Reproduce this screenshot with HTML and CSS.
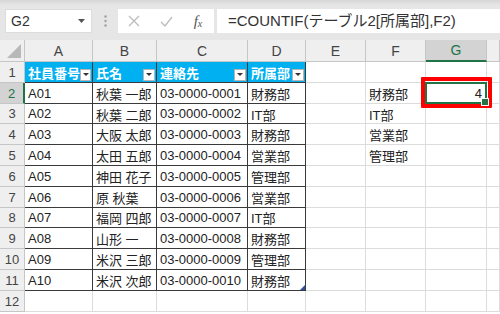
FILE: index.html
```html
<!DOCTYPE html>
<html lang="ja">
<head>
<meta charset="utf-8">
<title>Excel COUNTIF</title>
<link rel="stylesheet" href="styles.css">
</head>
<body>
<div class="app">
  <div class="toolbar">
    <div class="namebox"><span>G2</span><svg class="caret" width="7" height="4" viewBox="0 0 7 4"><polygon points="0,0 7,0 3.5,4" fill="#555"/></svg></div>
    <div class="grip"><svg width="3" height="12" viewBox="0 0 3 12"><circle cx="1.5" cy="1.5" r="1.2" fill="#a0a0a0"/><circle cx="1.5" cy="6" r="1.2" fill="#a0a0a0"/><circle cx="1.5" cy="10.5" r="1.2" fill="#a0a0a0"/></svg></div>
    <div class="fbtns">
      <span class="slot"><svg width="12" height="12" viewBox="0 0 12 12"><path d="M1 1 L11 11 M11 1 L1 11" stroke="#bcbcbc" stroke-width="1.3" fill="none"/></svg></span>
      <span class="slot"><svg width="13" height="11" viewBox="0 0 13 11"><path d="M1 6 L5 10 L12 1" stroke="#bcbcbc" stroke-width="1.3" fill="none"/></svg></span>
      <span class="slot fx">f<span class="sub">x</span></span>
    </div>
    <div class="formula">=COUNTIF(テーブル2[所属部],F2)</div>
  </div>
  <div class="sheet">
    <div class="ch corner"><svg width="14" height="14" viewBox="0 0 14 14"><polygon points="14,0 14,14 0,14" fill="#b8b8b8"/></svg></div>
    <div class="ch">A</div><div class="ch">B</div><div class="ch">C</div><div class="ch">D</div><div class="ch">E</div><div class="ch">F</div><div class="ch csel">G</div><div class="ch"></div>

    <div class="rh">1</div>
    <div class="th">社員番号<span class="fb"></span></div>
    <div class="th">氏名<span class="fb"></span></div>
    <div class="th">連絡先<span class="fb"></span></div>
    <div class="th">所属部<span class="fb"></span></div>
    <div></div><div></div><div></div><div></div>

    <div class="rh rsel">2</div>
    <div class="td">A01</div><div class="td">秋葉 一郎</div><div class="td">03-0000-0001</div><div class="td">財務部</div>
    <div></div><div>財務部</div><div class="g2">4<span class="mark"></span></div><div></div>

    <div class="rh">3</div>
    <div class="td">A02</div><div class="td">秋葉 二郎</div><div class="td">03-0000-0002</div><div class="td">IT部</div>
    <div></div><div>IT部</div><div></div><div></div>

    <div class="rh">4</div>
    <div class="td">A03</div><div class="td">大阪 太郎</div><div class="td">03-0000-0003</div><div class="td">財務部</div>
    <div></div><div>営業部</div><div></div><div></div>

    <div class="rh">5</div>
    <div class="td">A04</div><div class="td">太田 五郎</div><div class="td">03-0000-0004</div><div class="td">営業部</div>
    <div></div><div>管理部</div><div></div><div></div>

    <div class="rh">6</div>
    <div class="td">A05</div><div class="td">神田 花子</div><div class="td">03-0000-0005</div><div class="td">管理部</div>
    <div></div><div></div><div></div><div></div>

    <div class="rh">7</div>
    <div class="td">A06</div><div class="td">原 秋葉</div><div class="td">03-0000-0006</div><div class="td">営業部</div>
    <div></div><div></div><div></div><div></div>

    <div class="rh">8</div>
    <div class="td">A07</div><div class="td">福岡 四郎</div><div class="td">03-0000-0007</div><div class="td">IT部</div>
    <div></div><div></div><div></div><div></div>

    <div class="rh">9</div>
    <div class="td">A08</div><div class="td">山形 一</div><div class="td">03-0000-0008</div><div class="td">財務部</div>
    <div></div><div></div><div></div><div></div>

    <div class="rh">10</div>
    <div class="td">A09</div><div class="td">米沢 三郎</div><div class="td">03-0000-0009</div><div class="td">管理部</div>
    <div></div><div></div><div></div><div></div>

    <div class="rh">11</div>
    <div class="td">A10</div><div class="td">米沢 次郎</div><div class="td">03-0000-0010</div><div class="td tend">財務部</div>
    <div></div><div></div><div></div><div></div>

    <div class="rh">12</div>
    <div></div><div></div><div></div><div></div><div></div><div></div><div></div><div></div>
  </div>
</div>
</body>
</html>
```

FILE: styles.css
```css
* { box-sizing: border-box; margin: 0; padding: 0; }
html, body { width: 500px; height: 314px; overflow: hidden; background: #fff; }
body { font-family: "Liberation Sans", "Noto Sans CJK JP", sans-serif; color: #222; }

.toolbar {
  height: 40px;
  display: flex;
  align-items: flex-start;
  padding-top: 9px;
  background: linear-gradient(#d6d6d6 0, #e6e6e6 5px, #e6e6e6 100%);
}
.namebox {
  margin-left: 5px;
  width: 87px;
  height: 24px;
  background: #fff;
  border: 1px solid #dcdcdc;
  display: flex;
  align-items: center;
  padding-left: 5px;
  font-size: 14px;
  color: #333;
}
.namebox .caret { margin-left: auto; margin-right: 6px; }
.grip { width: 26px; height: 24px; display: flex; align-items: center; justify-content: center; }
.fbtns {
  width: 96px;
  height: 24px;
  background: #fff;
  display: flex;
  align-items: center;
}
.slot { width: 32px; display: flex; justify-content: center; align-items: center; }
.fx {
  font-family: "Liberation Serif", serif;
  font-style: italic;
  font-size: 15px;
  color: #555;
  line-height: 1;
}
.fx .sub { font-size: 10px; position: relative; top: 3px; }
.formula {
  margin-left: 3px;
  flex: 1;
  height: 24px;
  background: #fff;
  font-size: 15px;
  line-height: 24px;
  padding-left: 11px;
  color: #333;
  white-space: nowrap;
}

.sheet {
  display: grid;
  grid-template-columns: 25px 68px 64px 91px 58px 60px 60px 61px 13px;
  grid-template-rows: 22px repeat(12, 20.8px);
  font-size: 13px;
}
.sheet > div {
  border-right: 1px solid #dcdcdc;
  border-bottom: 1px solid #dcdcdc;
  display: flex;
  align-items: center;
  padding: 1px 3px 0;
  white-space: nowrap;
}
.sheet > .ch {
  background: #efefef;
  border-color: #c6c6c6;
  justify-content: center;
  font-size: 14px;
  color: #444;
  padding: 0;
}
.sheet > .corner { justify-content: flex-end; align-items: flex-end; padding: 0 3px 3px 0; }
.sheet > .csel { background: #d3d3d3; border-bottom: 2px solid #217346; color: #217346; }
.sheet > .rh {
  background: #efefef;
  border-color: #c6c6c6;
  justify-content: center;
  color: #444;
  padding: 1px 0 0;
}
.sheet > .rsel { background: #d3d3d3; color: #217346; border-right: 2px solid #217346; }
.sheet > .th {
  background: #00b0f0;
  color: #fff;
  font-weight: bold;
  border-right-color: #3a3a3a;
  border-bottom-color: #3a3a3a;
  padding-right: 1px;
}
.sheet > .td { border-right-color: #3a3a3a; border-bottom-color: #3a3a3a; }
.fb {
  margin-left: auto;
  align-self: flex-end;
  margin-bottom: 1px;
  width: 12px;
  height: 12px;
  background: #fff;
  border: 1px solid #b5b5b5;
  display: flex;
  align-items: center;
  justify-content: center;
}
.fb::after {
  content: "";
  border-left: 3px solid transparent;
  border-right: 3px solid transparent;
  border-top: 3px solid #333;
}
.sheet > .g2 { position: relative; justify-content: flex-end; padding-right: 4px; }
.g2::before {
  content: "";
  position: absolute;
  top: -1px; left: -1px; right: -1px; bottom: -1px;
  border: 2px solid #217346;
}
.g2::after {
  content: "";
  position: absolute;
  right: -3px; bottom: -3px;
  width: 6px; height: 6px;
  background: #217346;
  border: 1px solid #fff;
}
.mark {
  position: absolute;
  top: -6px; left: -5px; right: -6px; bottom: -5px;
  border: 4px solid #ff0000;
  border-radius: 1px;
}
.sheet > .tend { position: relative; }
.tend::after {
  content: "";
  position: absolute;
  right: 0; bottom: 0;
  border-left: 5px solid transparent;
  border-bottom: 5px solid #2f4fa8;
}
```
